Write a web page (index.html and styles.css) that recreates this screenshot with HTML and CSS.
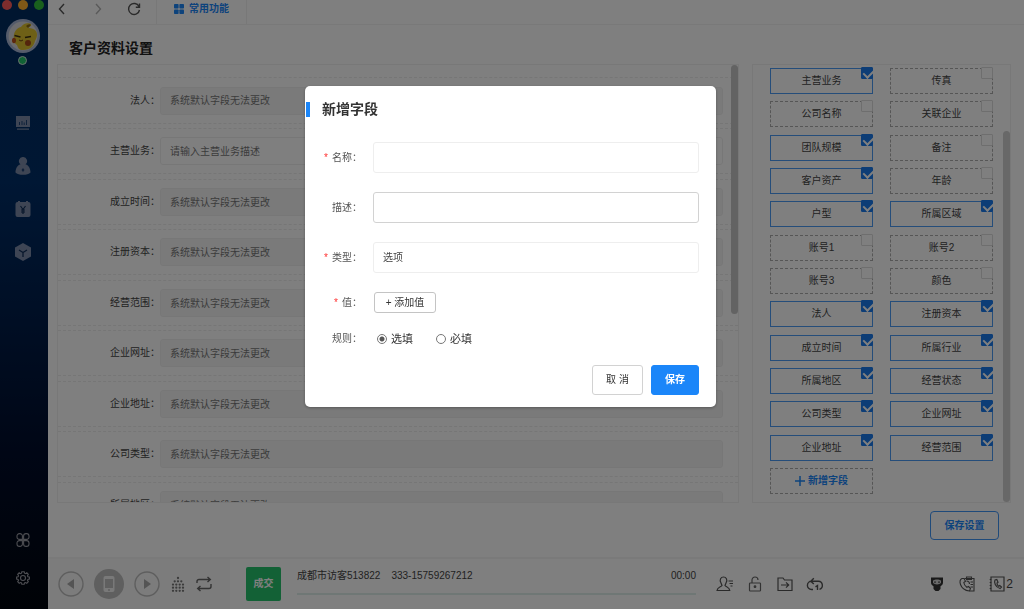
FILE: index.html
```html
<!DOCTYPE html>
<html lang="zh-CN">
<head>
<meta charset="utf-8">
<meta name="viewport" content="width=device-width, initial-scale=1">
<title>客户资料设置</title>
<link rel="stylesheet" href="styles.css">
</head>
<body>
<div class="app">
  <aside class="sidebar">
    <div class="lights"><span class="light light-red"></span><span class="light light-amber"></span><span class="light light-green"></span></div>
    <svg class="avatar" viewBox="0 0 34 34" aria-hidden="true">
      <circle cx="17" cy="17" r="17" fill="#a9b6d4"/>
      <circle cx="17" cy="17" r="14.400" fill="#d8d8dc"/>
      <path d="M8 20C7 14 10 9 15 8C17 5 20 3.500 24 4.500C27 5.500 24 8 22 9C26 9 29 10 30.500 13C32 17 30 20 29 22C28 27 24 31 17 31C13 31 12 29 11 26C9 25 8 23 8 20Z" fill="#dcc02e"/>
      <path d="M20 7Q23 4 25 6L22 9Z" fill="#8b6c16"/>
      <path d="M8.500 16.500L14.500 18M19 18.500L25 17.500" stroke="#3b2e10" stroke-width="1.600"/>
      <path d="M13 21Q15 23 17 21" stroke="#6b4310" fill="none"/>
      <circle cx="22" cy="24" r="3" fill="#a84a18"/><ellipse cx="8" cy="21.500" rx="2" ry="2.800" fill="#b8501c"/>
    </svg>
    <span class="status"></span>
    <nav class="side-nav">
      <a href="#" aria-label="工作台"><svg viewBox="0 0 16 16"><path fill="#7c8ba8" d="M1 1h14v11H1zM2 13.500h12v1.300H2z"/><path d="M4.500 10V7M7 10V6M9.200 10V7.500M11.500 10V5" stroke="#1f4275"/></svg></a>
      <a href="#" aria-label="客户"><svg viewBox="0 0 16 18"><path fill="#7c8ba8" d="M8 0a4 4 0 0 1 2.500 7.200C14 8.500 15.500 12 15.500 15.500C13 18.600 3 18.600.5 15.500C.5 12 2 8.500 5.500 7.200A4 4 0 0 1 8 0z"/><path d="M8 11l1.500 2L8 15l-1.500-2z" fill="#1f4275"/></svg></a>
      <a href="#" aria-label="账单"><svg viewBox="0 0 16 16"><path fill="#7c8ba8" d="M2.500 1H3V0h2v1h6V0h2v1h.5a2 2 0 0 1 2 2V14a2 2 0 0 1-2 2h-11a2 2 0 0 1-2-2V3a2 2 0 0 1 2-2z"/><path d="M5.500 5L8 8.500L10.500 5M8 8.500V13M6 9h4M6 11h4" fill="none" stroke="#102d57" stroke-width="1.200"/></svg></a>
      <a href="#" aria-label="产品"><svg viewBox="0 0 16 18"><path fill="#7c8ba8" d="M8 0l8 4.500v9L8 18l-8-4.500v-9z"/><path d="M4 7l4 2.500L12 7M8 9.500V14" fill="none" stroke="#102d57" stroke-width="1.300"/></svg></a>
    </nav>
    <nav class="side-tools">
      <a href="#" aria-label="应用"><svg viewBox="0 0 14 14" fill="none" stroke="#9a9ca4" stroke-width="1.100"><path d="M6.400 6.400H3.400A2.400 2.400 0 0 1 1 4V3A2.400 2.400 0 0 1 3.400.6H4A2.400 2.400 0 0 1 6.400 3zM7.600 6.400V3A2.400 2.400 0 0 1 10 .6h.6A2.400 2.400 0 0 1 13 3v1a2.400 2.400 0 0 1-2.400 2.400zM6.400 7.600V11A2.400 2.400 0 0 1 4 13.400h-.6A2.400 2.400 0 0 1 1 11v-1a2.400 2.400 0 0 1 2.400-2.400zM7.600 7.600h3A2.400 2.400 0 0 1 13 10v1a2.400 2.400 0 0 1-2.400 2.400H10A2.400 2.400 0 0 1 7.600 11z"/></svg></a>
      <a href="#" aria-label="设置"><svg viewBox="0 0 14 14" fill="none" stroke="#9a9ca4" stroke-width="1.100"><circle cx="7" cy="7" r="2.500"/><path d="M5.800.7h2.400l.3 1.500 1 .4 1.300-.8 1.500 1.600-.8 1.300.4 1 1.500.3v2l-1.500.4-.4 1 .8 1.300-1.500 1.600-1.300-.8-1 .4-.3 1.400H5.800l-.3-1.400-1-.4-1.300.8-1.500-1.600.8-1.300-.4-1L.6 8V6l1.500-.3.4-1-.8-1.300 1.500-1.600 1.300.8 1-.4z"/></svg></a>
    </nav>
  </aside>

  <main class="main">
    <header class="tabbar">
      <div class="history">
        <button type="button" aria-label="后退"><svg viewBox="0 0 14 14"><path d="M9 2L4.500 7L9 12" fill="none" stroke="#555" stroke-width="1.400"/></svg></button>
        <button type="button" aria-label="前进"><svg viewBox="0 0 14 14"><path d="M5 2L9.500 7L5 12" fill="none" stroke="#b4b4b4" stroke-width="1.400"/></svg></button>
        <button type="button" aria-label="刷新"><svg viewBox="0 0 14 14"><path d="M12 4.500A5.500 5.500 0 1 0 12.500 8M12.500 1.500v3.800H8.800" fill="none" stroke="#555" stroke-width="1.400"/></svg></button>
      </div>
      <a class="tab" href="#"><svg viewBox="0 0 10 10"><g fill="#1b86f9"><rect width="4.600" height="4.600" rx=".8"/><rect x="5.400" width="4.600" height="4.600" rx=".8"/><rect y="5.400" width="4.600" height="4.600" rx=".8"/><rect x="5.400" y="5.400" width="4.600" height="4.600" rx=".8"/></g></svg>常用功能</a>
    </header>
    <h1 class="page-title">客户资料设置</h1>

    <div class="panels">
      <section class="panel form-panel">
        <div class="field-list">
          <div class="field"><label for="f1">法人：</label><input id="f1" disabled placeholder="系统默认字段无法更改"></div>
          <div class="field"><label for="f2">主营业务：</label><input id="f2" placeholder="请输入主营业务描述"></div>
          <div class="field"><label for="f3">成立时间：</label><input id="f3" disabled placeholder="系统默认字段无法更改"></div>
          <div class="field"><label for="f4">注册资本：</label><input id="f4" disabled placeholder="系统默认字段无法更改"></div>
          <div class="field"><label for="f5">经营范围：</label><input id="f5" disabled placeholder="系统默认字段无法更改"></div>
          <div class="field"><label for="f6">企业网址：</label><input id="f6" disabled placeholder="系统默认字段无法更改"></div>
          <div class="field"><label for="f7">企业地址：</label><input id="f7" disabled placeholder="系统默认字段无法更改"></div>
          <div class="field"><label for="f8">公司类型：</label><input id="f8" disabled placeholder="系统默认字段无法更改"></div>
          <div class="field"><label for="f9">所属地区：</label><input id="f9" disabled placeholder="系统默认字段无法更改"></div>
        </div>
        <span class="thumb thumb-form"></span>
      </section>

      <section class="panel chip-panel">
        <div class="chips">
          <label class="chip"><input type="checkbox" checked>主营业务</label>
          <label class="chip"><input type="checkbox">传真</label>
          <label class="chip"><input type="checkbox">公司名称</label>
          <label class="chip"><input type="checkbox">关联企业</label>
          <label class="chip"><input type="checkbox" checked>团队规模</label>
          <label class="chip"><input type="checkbox">备注</label>
          <label class="chip"><input type="checkbox" checked>客户资产</label>
          <label class="chip"><input type="checkbox">年龄</label>
          <label class="chip"><input type="checkbox" checked>户型</label>
          <label class="chip"><input type="checkbox" checked>所属区域</label>
          <label class="chip"><input type="checkbox">账号1</label>
          <label class="chip"><input type="checkbox">账号2</label>
          <label class="chip"><input type="checkbox">账号3</label>
          <label class="chip"><input type="checkbox">颜色</label>
          <label class="chip"><input type="checkbox" checked>法人</label>
          <label class="chip"><input type="checkbox" checked>注册资本</label>
          <label class="chip"><input type="checkbox" checked>成立时间</label>
          <label class="chip"><input type="checkbox" checked>所属行业</label>
          <label class="chip"><input type="checkbox" checked>所属地区</label>
          <label class="chip"><input type="checkbox" checked>经营状态</label>
          <label class="chip"><input type="checkbox" checked>公司类型</label>
          <label class="chip"><input type="checkbox" checked>企业网址</label>
          <label class="chip"><input type="checkbox" checked>企业地址</label>
          <label class="chip"><input type="checkbox" checked>经营范围</label>
          <button type="button" class="chip chip-add"><svg viewBox="0 0 10 10"><path d="M5 0v10M0 5h10" stroke="#1b86f9" stroke-width="1.500"/></svg>新增字段</button>
        </div>
        <span class="thumb thumb-chips"></span>
      </section>
    </div>
    <div class="page-actions"><button type="button" class="save-settings">保存设置</button></div>

    <footer class="callbar">
      <div class="call-controls">
        <button type="button" aria-label="上一个"><svg class="i26" viewBox="0 0 26 26"><circle cx="13" cy="13" r="12" fill="none" stroke="#bdbdbd" stroke-width="1.400"/><path d="M16 8v10l-7-5z" fill="#a8a8a8"/></svg></button>
        <button type="button" aria-label="手机"><svg class="i30" viewBox="0 0 30 30"><circle cx="15" cy="15" r="15" fill="#bebebe"/><rect x="9.500" y="7" width="11" height="16" rx="2" fill="#f2f2f2"/><path d="M11 10h8v9h-8z" fill="#bebebe"/><circle cx="15" cy="21" r="1" fill="#bebebe"/></svg></button>
        <button type="button" aria-label="下一个"><svg class="i26" viewBox="0 0 26 26"><circle cx="13" cy="13" r="12" fill="none" stroke="#bdbdbd" stroke-width="1.400"/><path d="M10 8v10l7-5z" fill="#a8a8a8"/></svg></button>
        <button type="button" aria-label="拨号盘"><svg class="i16" viewBox="0 0 16 16"><path d="M8 2v.01M4.700 5.300v.01M8 5.300v.01M11.300 5.300v.01M3 8.600v.01M6.300 8.600v.01M9.700 8.600v.01M13 8.600v.01M3 11.700v.01M6.300 11.700v.01M9.700 11.700v.01M13 11.700v.01M3 14.800v.01M6.300 14.800v.01M9.700 14.800v.01M13 14.800v.01" stroke="#777" stroke-width="2.300" stroke-linecap="round"/></svg></button>
        <button type="button" aria-label="循环"><svg class="i16" viewBox="0 0 16 16" fill="none" stroke="#666" stroke-width="1.400"><path d="M1 7V5.500A2 2 0 0 1 3 3.500h11M11.500 1l2.800 2.500L11.500 6M15 8v2.500a2 2 0 0 1-2 2H2M4.500 10l-2.800 2.500L4.500 15"/></svg></button>
      </div>
      <div class="call-info">
        <button type="button" class="deal">成交</button>
        <div class="caller">
          <div class="caller-line"><span>成都市访客513822</span><span>333-15759267212</span><time>00:00</time></div>
          <div class="track"></div>
        </div>
        <div class="tools">
          <button type="button" aria-label="联系人"><svg viewBox="0 0 18 16" fill="none" stroke="#555" stroke-width="1.200"><path d="M5 7C3 3.500 5 1 7.500 1S12 3.500 10 7L9 9.500c1 1.500 4.500 1.500 4.800 5H1c.3-3.500 4-3.500 5-5zM12.500 5H17M13.500 7.500H17M14.500 10h2"/></svg></button>
          <button type="button" aria-label="解锁"><svg viewBox="0 0 16 16" fill="none" stroke="#666" stroke-width="1.200"><rect x="2.500" y="7" width="11" height="8" rx=".8"/><path d="M5 7V4a3 3 0 0 1 6 0"/><circle cx="8" cy="10.700" r=".8" fill="#444"/></svg></button>
          <button type="button" aria-label="转移"><svg viewBox="0 0 16 16" fill="none" stroke="#555" stroke-width="1.200"><path d="M1 2h5l1.500 2H15v10.500H1zM4 9h7.500M9 6.300L11.700 9L9 11.700"/></svg></button>
          <button type="button" aria-label="回拨"><svg viewBox="0 0 16 16" fill="none" stroke="#555" stroke-width="1.400"><path d="M6 13.500H4.500A4.100 4.100 0 0 1 4.500 5.300h7a4.100 4.100 0 0 1 1 8M6.800 2.300L3.800 5.200l3 2.800M10.500 14V9.500L8.500 10.800"/></svg></button>
        </div>
        <div class="tools tools-end">
          <button type="button" aria-label="机器人"><svg viewBox="0 0 16 16"><path d="M2 1.500h12v5c0 2-1 3-2.500 3.700V13L9.500 15h-3l-2-2v-2.800C3 9.500 2 8.500 2 6.500z" fill="#333"/><path d="M4 4.500c2-1.500 6-1.500 8 0v2.300C10.500 9 5.500 9 4 6.800z" fill="#d5d5d5"/><path d="M6 5.500v1.200M10 5.500v1.200" stroke="#222" stroke-width="1.400"/></svg></button>
          <button type="button" aria-label="通话记录"><svg viewBox="0 0 16 16" fill="none" stroke="#555" stroke-width="1.100"><path d="M5.500 2.500H15V15h-4.500M7.500 1h5v2.500h-5zM11.500 6H14M11.500 8.500H14M11.500 11H14"/><path d="M3 2.500c-2 1-2.500 3-1.500 6s4.500 6 9 6.500l1-2.500-2-2-1.700.8C6 10 5 8 4.800 6.500L6.500 5.300 5 2.500zM7.500 5c2 0 3 1.500 3 3"/></svg></button>
          <button type="button" class="counted" aria-label="未接电话"><svg viewBox="0 0 16 16" fill="none" stroke="#555" stroke-width="1.200"><path d="M2 1h13v14H2zM.7 3.500h2M.7 6.500h2M.7 9.500h2M.7 12.500h2"/><path d="M6 4c-1 2 0 7 5 8.500l1.500-1.500-1.800-1.500-1.200.7C8.500 9.500 8 8 8 7l1-.8L7.800 3.500z"/></svg><span>2</span></button>
        </div>
      </div>
    </footer>
  </main>
</div>

<div class="overlay">
  <form class="modal" role="dialog" aria-labelledby="modal-title">
    <h2 class="modal-title" id="modal-title">新增字段</h2>
    <div class="modal-body">
      <div class="row"><label for="name"><i>*</i>名称：</label><input class="control" id="name" type="text"></div>
      <div class="row"><label for="desc">描述：</label><input class="control control-strong" id="desc" type="text"></div>
      <div class="row"><label for="type"><i>*</i>类型：</label><select class="control" id="type"><option>选项</option></select></div>
      <div class="row row-short"><span class="row-label"><i>*</i>值：</span><button type="button" class="add-value">+ 添加值</button></div>
      <div class="row row-short" role="radiogroup" aria-labelledby="rule"><span class="row-label" id="rule">规则：</span>
        <div class="choices">
          <label class="choice"><input type="radio" name="rule" checked>选填</label>
          <label class="choice"><input type="radio" name="rule">必填</label>
        </div>
      </div>
      <div class="modal-actions"><button type="button" class="btn">取 消</button><button type="submit" class="btn btn-primary">保存</button></div>
    </div>
  </form>
</div>
</body>
</html>
```

FILE: styles.css
```css
* { box-sizing: border-box; }
body {
  margin: 0;
  font: 10px/16px "Liberation Sans", "Noto Sans CJK SC", sans-serif;
  color: #444;
  background: #fff;
}
button, input, select { font: inherit; color: inherit; }
button { padding: 0; border: 0; background: none; cursor: pointer; }
svg { display: block; flex: none; }
a { text-decoration: none; }

.app { display: grid; grid-template-columns: 48px 1fr; height: 100vh; }

/* Sidebar */
.sidebar {
  display: flex;
  flex-direction: column;
  align-items: center;
  padding-right: 3px;
  background: linear-gradient(#002c60, #002e68 30%, #000c2a 75%, #00050c);
}
.lights { display: flex; gap: 6px; }
.light { width: 10px; height: 10px; border-radius: 50%; }
.light-red { background: #fc5b5b; }
.light-amber { background: #fdb02f; }
.light-green { background: #33c13b; }
.avatar { width: 34px; height: 34px; margin-top: 9px; }
.status { width: 9px; height: 9px; margin-top: 3px; border: 1px solid #d5e5dd; border-radius: 50%; background: #22c46a; }
.side-nav { display: grid; gap: 25px; margin-top: 49px; }
.side-nav svg { width: 16px; height: 18px; }
.side-tools { display: grid; gap: 24px; margin: auto 0 24px; }
.side-tools svg { width: 14px; height: 14px; }

/* Page */
.main { display: flex; flex-direction: column; min-width: 0; min-height: 0; }
.tabbar { display: flex; height: 25px; padding-bottom: 7px; border-bottom: 1px solid #f2f2f2; align-items: center; flex: none; }
.history { display: flex; gap: 22px; padding: 0 15px 0 7px; }
.history svg { width: 14px; height: 14px; }
.tab {
  display: flex;
  align-items: center;
  gap: 5px;
  height: 24px;
  margin-bottom: -7px;
  padding: 0 17px 7px;
  border: solid #f0f0f0;
  border-width: 0 1px;
  color: #1b86f9;
  font-weight: 700;
}
.tab svg { width: 10px; height: 10px; }
.page-title { margin: 0; padding: 13px 21px 6px; font-size: 14px; line-height: 20px; font-weight: 700; color: #222; }

.panels { display: grid; grid-template-columns: 682fr 259fr; gap: 13px; flex: 1; min-height: 0; padding: 0 13px 0 9px; }
.panel { position: relative; min-height: 0; border: 1px solid #f0f0f0; overflow: hidden; }
.field-list {
  display: grid;
  grid-template-rows: repeat(5, 50px 51px);
  margin-top: 12px;
  border-top: 1px dashed #ececec;
}
.field {
  display: grid;
  grid-template-columns: 102px 1fr;
  align-items: center;
  height: 46px;
  padding-right: 15px;
  border-bottom: 1px dashed #ececec;
}
.field + .field { border-top: 1px dashed #ececec; }
.field label { text-align: right; }
.field input { width: 100%; height: 28px; padding: 0 9px; border: 1px solid #efefef; border-radius: 3px; background: #fff; }
.field input:disabled { background: #f5f5f5; }
.field input::placeholder { color: #777; opacity: 1; }
.thumb { position: absolute; right: 0; width: 7px; border-radius: 4px; background: #c6c6c6; }
.thumb-form { top: 0; height: 57%; }
.thumb-chips { bottom: 0; height: 85%; background: #d0d0d0; }

.chip-panel { display: grid; padding: 3px 17px 8px; }
.chips { display: grid; grid-template-columns: 1fr 1fr; gap: 0 17px; align-content: space-between; }
.chip {
  position: relative;
  display: flex;
  align-items: center;
  justify-content: center;
  gap: 3px;
  height: 26px;
  border: 1px dashed #acacac;
}
.chip:has(:checked) { border: 1px solid #4b9bf5; }
.chip input {
  position: absolute;
  top: -2px;
  right: -1px;
  width: 12px;
  height: 12px;
  margin: 0;
  appearance: none;
  border: 1px solid #dcdcdc;
  border-radius: 1px;
  background: #fff;
}
.chip input:checked { border-color: #1a7bec; background: #1a7bec; }
.chip input:checked::after {
  content: "";
  position: absolute;
  top: 0;
  left: 3px;
  width: 5px;
  height: 8px;
  border: solid #fff;
  border-width: 0 2px 2px 0;
  transform: rotate(45deg);
}
.chip-add { color: #1b86f9; font-weight: 700; }
.chip-add svg { width: 10px; height: 10px; }

.page-actions { display: flex; justify-content: flex-end; padding: 8px 25px 17px; }
.save-settings { width: 69px; height: 29px; border: 1px solid #3f94f5; border-radius: 4px; color: #1b86f9; font-weight: 700; }

/* Call bar */
.callbar { display: flex; height: 52px; border-top: 2px solid #f4f4f4; flex: none; }
.call-controls { display: flex; align-items: center; gap: 10px; padding: 0 18px 0 10px; background: #f8f8f8; }
.i26 { width: 26px; height: 26px; }
.i30 { width: 30px; height: 30px; }
.i16 { width: 16px; height: 16px; }
.call-info { display: flex; align-items: center; flex: 1; min-width: 0; padding: 0 11px 0 16px; }
.deal { width: 35px; height: 34px; border-radius: 2px; background: #26c26c; color: #fff; font-weight: 700; }
.caller { width: 399px; margin: 0 20px 6px 16px; }
.caller-line { display: flex; gap: 11px; }
.caller-line time { margin-left: auto; }
.track { height: 2px; margin-top: 9px; background: #deeeea; }
.tools { display: flex; align-items: center; gap: 12px; }
.tools svg { width: 18px; height: 16px; }
.tools-end { margin-left: auto; }
.counted { display: flex; align-items: center; font-size: 12px; }

/* Dialog */
.overlay {
  position: fixed;
  inset: 0;
  display: flex;
  align-items: flex-start;
  justify-content: center;
  padding: 86px 3px 0 0;
  background: rgba(0, 0, 0, .5);
}
.modal { width: 411px; padding: 13px 17px 12px 0; border-radius: 5px; background: #fff; box-shadow: 0 1px 3px rgba(0, 0, 0, .3); }
.modal-title {
  display: flex;
  align-items: center;
  gap: 12px;
  margin: 0 0 23px 1px;
  font-size: 14px;
  line-height: 20px;
  font-weight: 700;
  color: #333;
}
.modal-title::before { content: ""; width: 4px; height: 15px; background: #1b86f9; }
.row { display: grid; grid-template-columns: 57px 1fr; column-gap: 11px; align-items: center; margin-bottom: 19px; }
.row > label, .row-label { text-align: right; color: #555; }
.row i { margin-right: 4px; color: #f33; font-style: normal; }
.control { width: 100%; height: 31px; padding: 0 9px; border: 1px solid #eee; border-radius: 3px; background: #fff; appearance: none; }
.control-strong { border-color: #d2d2d2; }
.row-short { column-gap: 12px; margin-bottom: 18px; }
.add-value { width: 62px; height: 21px; border: 1px solid #c4c4c4; border-radius: 3px; color: #333; }
.choices { display: flex; gap: 23px; padding-left: 3px; }
.choice { display: flex; align-items: center; gap: 4px; font-size: 11px; color: #333; }
.choice input { width: 10px; height: 10px; margin: 0; appearance: none; border: 1px solid #777; border-radius: 50%; }
.choice input:checked { background: radial-gradient(circle, #555 0 2px, transparent 3px); }
.modal-actions { display: flex; justify-content: flex-end; gap: 8px; }
.btn { width: 51px; height: 30px; border: 1px solid #d2d2d2; border-radius: 3px; color: #333; }
.btn-primary { width: 48px; border-color: #1b86f9; background: #1b86f9; color: #fff; font-weight: 700; }
```
